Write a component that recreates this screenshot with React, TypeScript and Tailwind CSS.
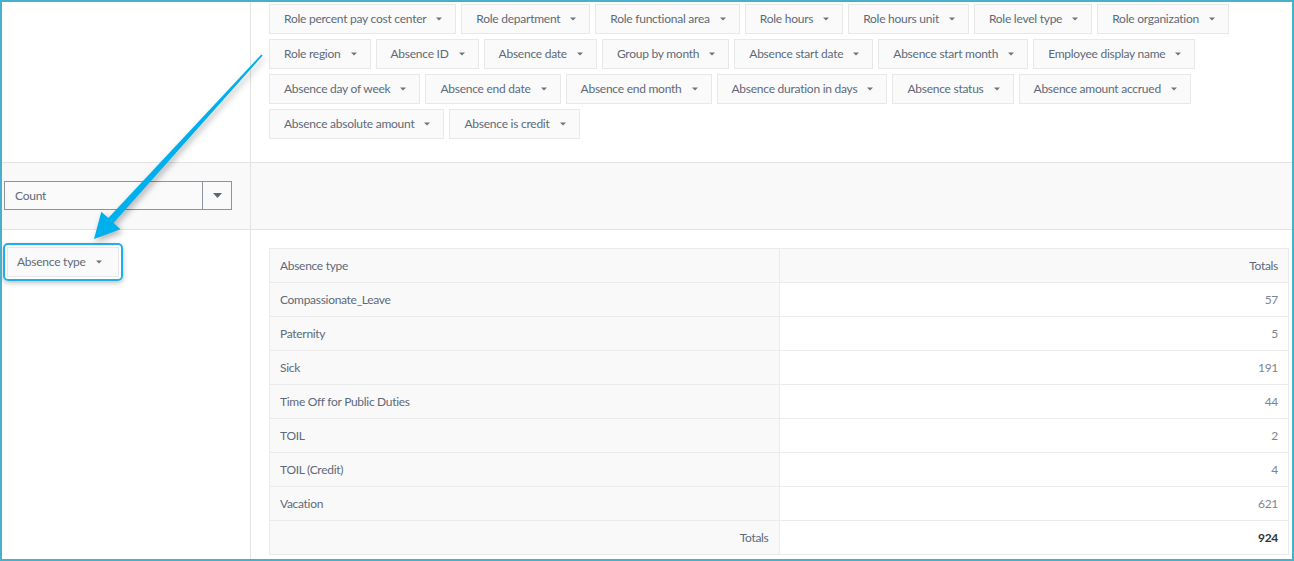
import React from 'react';

const fields = [
  'Role percent pay cost center',
  'Role department',
  'Role functional area',
  'Role hours',
  'Role hours unit',
  'Role level type',
  'Role organization',
  'Role region',
  'Absence ID',
  'Absence date',
  'Group by month',
  'Absence start date',
  'Absence start month',
  'Employee display name',
  'Absence day of week',
  'Absence end date',
  'Absence end month',
  'Absence duration in days',
  'Absence status',
  'Absence amount accrued',
  'Absence absolute amount',
  'Absence is credit',
];

const rows: [string, number][] = [
  ['Compassionate_Leave', 57],
  ['Paternity', 5],
  ['Sick', 191],
  ['Time Off for Public Duties', 44],
  ['TOIL', 2],
  ['TOIL (Credit)', 4],
  ['Vacation', 621],
];

function Caret() {
  return (
    <svg width="6" height="4" viewBox="0 0 6 4" className="shrink-0">
      <path d="M0 0.5h6L3 3.5z" fill="#6b7280" />
    </svg>
  );
}

function Chip({ label }: { label: string }) {
  return (
    <div className="flex h-[30px] items-center gap-[10px] border border-[#e8e8e8] bg-[#fafafa] pl-[14px] pr-[13px] text-[12px] tracking-[-0.25px] text-[#5e6a79]">
      <span>{label}</span>
      <Caret />
    </div>
  );
}

export default function App() {
  return (
    <div
      className="relative h-[561px] w-[1294px] overflow-hidden border-2 border-[#46b1ca] bg-white"
      style={{ fontFamily: 'Lato, "Open Sans", sans-serif' }}
    >
      <div className="grid h-full grid-cols-[249px_1fr] grid-rows-[161px_67px_1fr]">
        {/* top left empty */}
        <div className="border-b border-r border-[#e3e3e3]" />
        {/* field chips */}
        <div className="flex flex-wrap content-start gap-[5px] border-b border-[#e3e3e3] pl-[18px] pr-[40px] pt-[2px]">
          {fields.map((f) => (
            <Chip key={f} label={f} />
          ))}
        </div>

        {/* aggregator select */}
        <div className="flex items-center border-b border-r border-[#e3e3e3] bg-[#f9f9f9] pb-[2px] pl-[2px]">
          <div className="flex h-[29px] w-[228px] border border-[#8b939e] bg-[#fafafa]">
            <div className="flex flex-1 items-center border-r border-[#8b939e] pl-[10px] pt-[2px] text-[12px] tracking-[-0.25px] text-[#5e6a79]">
              Count
            </div>
            <div className="flex w-[28px] items-center justify-center">
              <svg width="9" height="5" viewBox="0 0 9 5">
                <path d="M0 0h9L4.5 5z" fill="#5b6676" />
              </svg>
            </div>
          </div>
        </div>
        <div className="border-b border-[#e3e3e3] bg-[#f9f9f9]" />

        {/* row fields */}
        <div className="border-r border-[#e3e3e3] pl-px pt-[13px]">
          <div className="inline-flex rounded-[5px] border-2 border-[#1eb0ea] p-[2px] shadow-[0_2px_5px_rgba(0,0,0,0.25)]">
            <div className="flex h-[30px] items-center gap-[10px] border border-[#e8e8e8] bg-[#fafafa] pl-[9px] pr-[16px] text-[12px] tracking-[-0.25px] text-[#5e6a79]">
              <span>Absence type</span>
              <Caret />
            </div>
          </div>
        </div>

        {/* pivot table */}
        <div className="pl-[18px] pr-[3px] pt-[18px]">
          <table className="w-full border-collapse text-[12px] tracking-[-0.3px] text-[#5e6a79]">
            <tbody>
              <tr className="h-[34px]">
                <td className="w-1/2 border border-[#ebebeb] bg-[#f9f9f9] px-[10px]">Absence type</td>
                <td className="border border-[#ebebeb] bg-[#f9f9f9] px-[10px] text-right">Totals</td>
              </tr>
              {rows.map(([name, val]) => (
                <tr key={name} className="h-[34px]">
                  <td className="border border-[#ebebeb] bg-[#f9f9f9] px-[10px]">{name}</td>
                  <td className="border border-[#ebebeb] bg-white px-[10px] text-right text-[#7e8494]">{val}</td>
                </tr>
              ))}
              <tr className="h-[34px]">
                <td className="border border-[#ebebeb] bg-[#f9f9f9] px-[10px] text-right">Totals</td>
                <td className="border border-[#ebebeb] bg-white px-[10px] text-right font-bold text-[#333]">924</td>
              </tr>
            </tbody>
          </table>
        </div>
      </div>

      {/* annotation arrow */}
      <svg
        className="pointer-events-none absolute left-[-2px] top-[-2px]"
        width="1294"
        height="561"
        style={{ filter: 'drop-shadow(2px 3px 3px rgba(0,0,0,0.3))' }}
      >
        <polygon
          points="262.7,55.6 113.5,222.9 120.5,229.3 94,239 101.3,211.7 108.3,218.1 261.3,54.4"
          fill="#00b0ed"
        />
      </svg>
    </div>
  );
}
